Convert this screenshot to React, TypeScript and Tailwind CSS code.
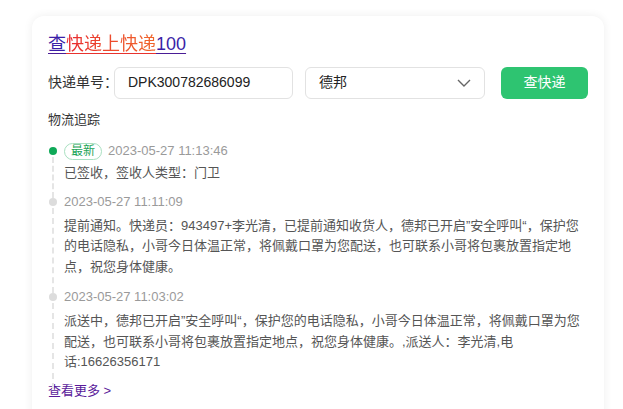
import React from "react";

const items = [
  {
    latest: true,
    time: "2023-05-27 11:13:46",
    text: "已签收，签收人类型：门卫",
  },
  {
    latest: false,
    time: "2023-05-27 11:11:09",
    text: "提前通知。快递员：943497+李光清，已提前通知收货人，德邦已开启\u201d安全呼叫\u201c，保护您的电话隐私，小哥今日体温正常，将佩戴口罩为您配送，也可联系小哥将包裹放置指定地点，祝您身体健康。",
  },
  {
    latest: false,
    time: "2023-05-27 11:03:02",
    text: "派送中，德邦已开启\u201d安全呼叫\u201c，保护您的电话隐私，小哥今日体温正常，将佩戴口罩为您配送，也可联系小哥将包裹放置指定地点，祝您身体健康。,派送人：李光清,电话:16626356171",
  },
];

export default function App() {
  return (
    <div
      className="w-[623px] h-[409px] overflow-hidden bg-white"
      style={{ fontFamily: '"Liberation Sans", "Noto Sans CJK SC", sans-serif' }}
    >
      <div className="ml-[32px] mt-[16px] w-[572px] h-[420px] rounded-[12px] bg-white shadow-[0_0_10px_rgba(0,0,0,0.07)] px-[16px] pt-[16px]">
        <div className="h-[24px] flex items-center">
          <a className="text-[18px] leading-[24px] underline underline-offset-[3px] decoration-[#4a1d96]">
            <span className="text-[#3b1fa8]">查</span>
            <span className="bg-gradient-to-r from-[#e8262f] to-[#f0662a] bg-clip-text text-transparent underline decoration-[#e8322e]">
              快递上快递
            </span>
            <span className="text-[#3b1fa8]">100</span>
          </a>
        </div>
        <div className="mt-[11px] flex items-center h-[31px]">
          <span className="text-[14px] text-[#333] w-[66px] shrink-0 whitespace-nowrap">快递单号：</span>
          <div className="w-[179px] shrink-0 h-[32px] border border-[#e2e2e2] rounded-[6px] flex items-center pl-[13px] text-[14px] text-[#222]">
            DPK300782686099
          </div>
          <div className="ml-[12px] w-[180px] shrink-0 h-[32px] border border-[#e2e2e2] rounded-[6px] flex items-center justify-between pl-[13px] pr-[12px] text-[14px] text-[#222]">
            <span>德邦</span>
            <svg width="16" height="10" viewBox="0 0 16 10" fill="none">
              <path d="M2 2 L8 8 L14 2" stroke="#666" strokeWidth="1.4" />
            </svg>
          </div>
          <button className="ml-[16px] w-[87px] shrink-0 h-[32px] rounded-[6px] bg-[#2ec471] text-white text-[14px]">
            查快递
          </button>
        </div>
        <div className="mt-[12px] text-[13px] leading-[20px] text-[#333]">物流追踪</div>
        <div className="mt-[11px]">
          {items.map((it, i) => (
            <div key={i} className={`relative pl-[16px] ${i === 0 ? "pb-[8px]" : "pb-[10px]"}`}>
              <div
                className={`absolute left-[1px] top-[6px] w-[8px] h-[8px] rounded-full ${
                  it.latest ? "bg-[#0fa958]" : "bg-[#dcdcdc]"
                }`}
              />
              <div className="absolute left-[4px] top-[16px] bottom-[-6px] border-l-[2px] border-dashed border-[#e5e5e5]" />
              <div className="flex items-center h-[20px] text-[13px] text-[#9a9a9a]">
                {it.latest && (
                  <span className="mr-[6px] h-[17px] px-[6px] rounded-full border border-[#a8e0c0] text-[#1aa456] text-[12px] leading-[15px] flex items-center">
                    最新
                  </span>
                )}
                <span>{it.time}</span>
              </div>
              <div
                className={`${i === 0 ? "mt-[2px]" : "mt-[4px]"} text-[13px] leading-[20.5px] text-[#555] w-[524px]`}
              >
                {it.text}
              </div>
            </div>
          ))}
        </div>
        <div className="mt-[-2px] text-[13px] leading-[20px] text-[#5a1a9a]">查看更多 &gt;</div>
      </div>
    </div>
  );
}
